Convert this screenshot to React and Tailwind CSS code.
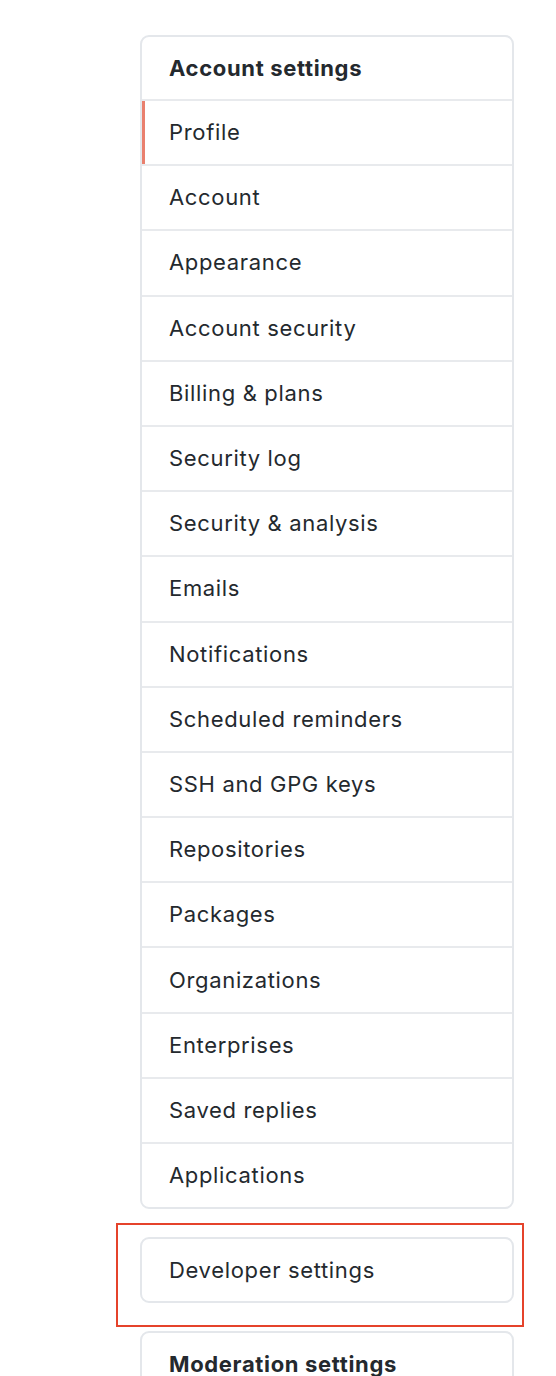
import React from 'react';

const items = [
  'Profile',
  'Account',
  'Appearance',
  'Account security',
  'Billing & plans',
  'Security log',
  'Security & analysis',
  'Emails',
  'Notifications',
  'Scheduled reminders',
  'SSH and GPG keys',
  'Repositories',
  'Packages',
  'Organizations',
  'Enterprises',
  'Saved replies',
  'Applications',
];

const NavRow = ({ label, selected }) => (
  <div className="relative h-[65.2px] flex items-center pl-[27px] border-t-2 border-[#e8eaed] text-[22px] tracking-[0.03em] text-[#24292e]">
    {selected && <span className="absolute left-0 top-0 bottom-0 w-[3px] bg-[#e9806e]" />}
    {label}
  </div>
);

export default function App() {
  return (
    <div
      className="min-h-screen bg-white pt-[35px] pb-10"
      style={{ fontFamily: 'Inter, "Liberation Sans", sans-serif' }}
    >
      <div className="ml-[140px] w-[374px]">
        <div className="rounded-[9px] border-2 border-[#e4e7eb] overflow-hidden">
          <div className="h-[62px] flex items-center pl-[27px] text-[22px] font-bold tracking-[0.03em] text-[#24292e]">
            Account settings
          </div>
          {items.map((label, i) => (
            <NavRow key={label} label={label} selected={i === 0} />
          ))}
        </div>

        <div className="relative mt-[28px]">
          <div className="h-[66px] rounded-[9px] border-2 border-[#e4e7eb] flex items-center pl-[27px] text-[22px] tracking-[0.03em] text-[#24292e]">
            Developer settings
          </div>
          <div className="absolute left-[-24px] right-[-10px] top-[-14px] bottom-[-24px] border-2 border-[#e5432b] pointer-events-none" />
        </div>

        <div className="mt-[28px] rounded-[9px] border-2 border-[#e4e7eb]">
          <div className="h-[62px] flex items-center pl-[27px] text-[22px] font-bold tracking-[0.03em] text-[#24292e]">
            Moderation settings
          </div>
          <div className="h-[65px] border-t-2 border-[#e8eaed]" />
        </div>
      </div>
    </div>
  );
}
